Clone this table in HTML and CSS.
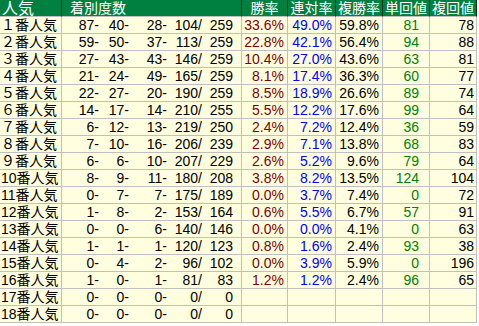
FILE: index.html
```html
<!DOCTYPE html>
<html lang="ja">
<head>
<meta charset="utf-8">
<title>人気別成績</title>
<link rel="stylesheet" href="styles.css">
</head>
<body>
<div class="tbl">
  <div class="h h-pop">人気</div>
  <div class="h h-rec">着別度数</div>
  <div class="h h-c">勝率</div>
  <div class="h h-c">連対率</div>
  <div class="h h-c">複勝率</div>
  <div class="h h-c">単回値</div>
  <div class="h h-c">複回値</div>

  <div class="c pop">１番人気</div><div class="c rec"><span class="f1">87-</span><span class="f2">40-</span><span class="f3">28-</span><span class="f4">104/</span><span class="f5">259</span></div><div class="c win">33.6%</div><div class="c ren">49.0%</div><div class="c fuku">59.8%</div><div class="c tan">81</div><div class="c fk">78</div>
  <div class="c pop">２番人気</div><div class="c rec"><span class="f1">59-</span><span class="f2">50-</span><span class="f3">37-</span><span class="f4">113/</span><span class="f5">259</span></div><div class="c win">22.8%</div><div class="c ren">42.1%</div><div class="c fuku">56.4%</div><div class="c tan">94</div><div class="c fk">88</div>
  <div class="c pop">３番人気</div><div class="c rec"><span class="f1">27-</span><span class="f2">43-</span><span class="f3">43-</span><span class="f4">146/</span><span class="f5">259</span></div><div class="c win">10.4%</div><div class="c ren">27.0%</div><div class="c fuku">43.6%</div><div class="c tan">63</div><div class="c fk">81</div>
  <div class="c pop">４番人気</div><div class="c rec"><span class="f1">21-</span><span class="f2">24-</span><span class="f3">49-</span><span class="f4">165/</span><span class="f5">259</span></div><div class="c win">8.1%</div><div class="c ren">17.4%</div><div class="c fuku">36.3%</div><div class="c tan">60</div><div class="c fk">77</div>
  <div class="c pop">５番人気</div><div class="c rec"><span class="f1">22-</span><span class="f2">27-</span><span class="f3">20-</span><span class="f4">190/</span><span class="f5">259</span></div><div class="c win">8.5%</div><div class="c ren">18.9%</div><div class="c fuku">26.6%</div><div class="c tan">89</div><div class="c fk">74</div>
  <div class="c pop">６番人気</div><div class="c rec"><span class="f1">14-</span><span class="f2">17-</span><span class="f3">14-</span><span class="f4">210/</span><span class="f5">255</span></div><div class="c win">5.5%</div><div class="c ren">12.2%</div><div class="c fuku">17.6%</div><div class="c tan">99</div><div class="c fk">64</div>
  <div class="c pop">７番人気</div><div class="c rec"><span class="f1">6-</span><span class="f2">12-</span><span class="f3">13-</span><span class="f4">219/</span><span class="f5">250</span></div><div class="c win">2.4%</div><div class="c ren">7.2%</div><div class="c fuku">12.4%</div><div class="c tan">36</div><div class="c fk">59</div>
  <div class="c pop">８番人気</div><div class="c rec"><span class="f1">7-</span><span class="f2">10-</span><span class="f3">16-</span><span class="f4">206/</span><span class="f5">239</span></div><div class="c win">2.9%</div><div class="c ren">7.1%</div><div class="c fuku">13.8%</div><div class="c tan">68</div><div class="c fk">83</div>
  <div class="c pop">９番人気</div><div class="c rec"><span class="f1">6-</span><span class="f2">6-</span><span class="f3">10-</span><span class="f4">207/</span><span class="f5">229</span></div><div class="c win">2.6%</div><div class="c ren">5.2%</div><div class="c fuku">9.6%</div><div class="c tan">79</div><div class="c fk">64</div>
  <div class="c pop">10番人気</div><div class="c rec"><span class="f1">8-</span><span class="f2">9-</span><span class="f3">11-</span><span class="f4">180/</span><span class="f5">208</span></div><div class="c win">3.8%</div><div class="c ren">8.2%</div><div class="c fuku">13.5%</div><div class="c tan">124</div><div class="c fk">104</div>
  <div class="c pop">11番人気</div><div class="c rec"><span class="f1">0-</span><span class="f2">7-</span><span class="f3">7-</span><span class="f4">175/</span><span class="f5">189</span></div><div class="c win">0.0%</div><div class="c ren">3.7%</div><div class="c fuku">7.4%</div><div class="c tan">0</div><div class="c fk">72</div>
  <div class="c pop">12番人気</div><div class="c rec"><span class="f1">1-</span><span class="f2">8-</span><span class="f3">2-</span><span class="f4">153/</span><span class="f5">164</span></div><div class="c win">0.6%</div><div class="c ren">5.5%</div><div class="c fuku">6.7%</div><div class="c tan">57</div><div class="c fk">91</div>
  <div class="c pop">13番人気</div><div class="c rec"><span class="f1">0-</span><span class="f2">0-</span><span class="f3">6-</span><span class="f4">140/</span><span class="f5">146</span></div><div class="c win">0.0%</div><div class="c ren">0.0%</div><div class="c fuku">4.1%</div><div class="c tan">0</div><div class="c fk">63</div>
  <div class="c pop">14番人気</div><div class="c rec"><span class="f1">1-</span><span class="f2">1-</span><span class="f3">1-</span><span class="f4">120/</span><span class="f5">123</span></div><div class="c win">0.8%</div><div class="c ren">1.6%</div><div class="c fuku">2.4%</div><div class="c tan">93</div><div class="c fk">38</div>
  <div class="c pop">15番人気</div><div class="c rec"><span class="f1">0-</span><span class="f2">4-</span><span class="f3">2-</span><span class="f4">96/</span><span class="f5">102</span></div><div class="c win">0.0%</div><div class="c ren">3.9%</div><div class="c fuku">5.9%</div><div class="c tan">0</div><div class="c fk">196</div>
  <div class="c pop">16番人気</div><div class="c rec"><span class="f1">1-</span><span class="f2">0-</span><span class="f3">1-</span><span class="f4">81/</span><span class="f5">83</span></div><div class="c win">1.2%</div><div class="c ren">1.2%</div><div class="c fuku">2.4%</div><div class="c tan">96</div><div class="c fk">65</div>
  <div class="c pop">17番人気</div><div class="c rec"><span class="f1">0-</span><span class="f2">0-</span><span class="f3">0-</span><span class="f4">0/</span><span class="f5">0</span></div><div class="c win"></div><div class="c ren"></div><div class="c fuku"></div><div class="c tan"></div><div class="c fk"></div>
  <div class="c pop">18番人気</div><div class="c rec"><span class="f1">0-</span><span class="f2">0-</span><span class="f3">0-</span><span class="f4">0/</span><span class="f5">0</span></div><div class="c win"></div><div class="c ren"></div><div class="c fuku"></div><div class="c tan"></div><div class="c fk"></div>
</div>
</body>
</html>
```

FILE: styles.css
```css
html, body {
  margin: 0;
  padding: 0;
  background: #ffffff;
}

.tbl {
  display: grid;
  grid-template-columns: 62px 180px 46px 48px 47px 47px 47px;
  grid-auto-rows: 17px;
  width: 477px;
  font-family: "Liberation Sans", "Noto Sans CJK JP", sans-serif;
  font-size: 14px;
  line-height: 15px;
  color: #000000;
}

.h, .c {
  box-sizing: border-box;
  padding-top: 1px;
  border-right: 1px solid #c0c0c0;
  border-bottom: 1px solid #c0c0c0;
  white-space: nowrap;
}

.h {
  background: #008040;
  color: #ffffff;
  border-right-color: #003018;
  font-size: 14px;
}

.h-pop {
  padding-left: 2px;
  font-size: 16px;
}

.h-rec {
  padding-left: 8px;
}

.h-c {
  text-align: center;
}

.c {
  background: #ffffe0;
}

.pop {
  padding-left: 1px;
}

.rec {
  display: flex;
}

.rec span {
  display: block;
  text-align: right;
}

.f1 { width: 37px; }
.f2 { width: 30px; }
.f3 { width: 38px; }
.f4 { width: 35px; }
.f5 { width: 31px; }

.win, .ren, .fuku, .tan, .fk {
  text-align: right;
}

.win {
  color: #800000;
  padding-right: 3px;
}

.ren {
  color: #0000ff;
  padding-right: 3px;
}

.fuku {
  padding-right: 3px;
}

.tan {
  color: #008000;
  padding-right: 10px;
}

.fk {
  padding-right: 2px;
}
```
